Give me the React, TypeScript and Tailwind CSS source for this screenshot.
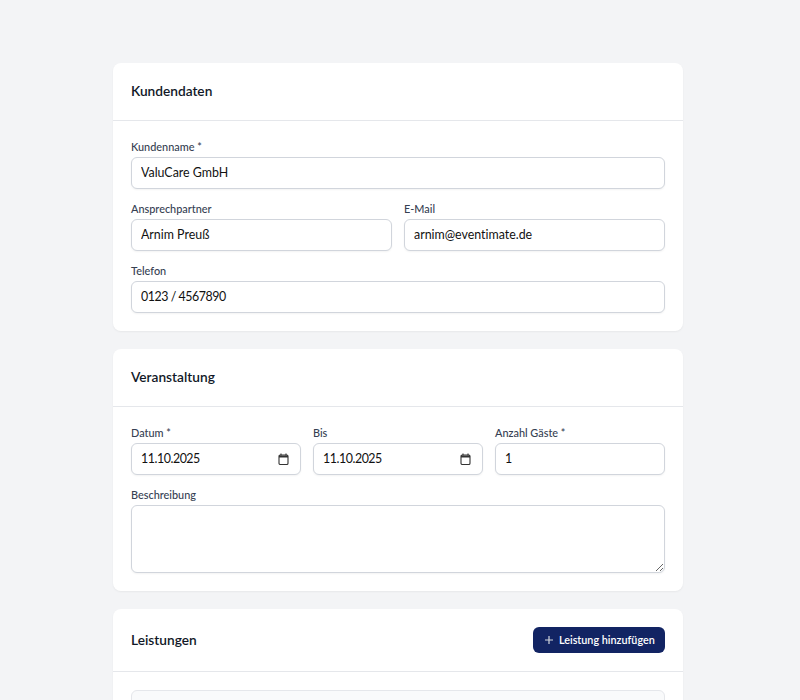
const font = { fontFamily: 'Lato, "Noto Sans", sans-serif', fontVariantLigatures: 'none' };

function Field({ label, value, date, numeric }: { label: string; value: string; date?: boolean; numeric?: boolean }) {
  return (
    <div>
      <label className="block mb-[3px] text-[10.9px] leading-[15px] font-medium text-gray-700">{label}</label>
      <div className="flex items-center h-8 pl-[9px] pr-[11px] bg-white border border-gray-300 rounded-md shadow-xs">
        <input
          readOnly
          value={value}
          style={font}
          className={`w-full min-w-0 pt-px text-[12.4px] text-[#111] outline-none bg-transparent ${numeric ? 'tracking-[-0.45px]' : ''}`}
        />
        {date && (
          <svg viewBox="0 0 11 12" className="w-[11px] h-3 shrink-0 text-[#333]" fill="none" stroke="currentColor">
            <rect x="1" y="2" width="9" height="9.500" rx="1.200" strokeWidth="1.100" />
            <path d="M1 3.500h9" strokeWidth="2" />
            <path d="M3 .500v2M8 .500v2" strokeWidth="1.100" />
          </svg>
        )}
      </div>
    </div>
  );
}

function CardHeader({ title }: { title: string }) {
  return (
    <div className="p-[18px] border-b border-gray-200">
      <h2 className="text-[13.7px] leading-[19px] mb-[2px] font-semibold text-[#111827]">{title}</h2>
    </div>
  );
}

export default function App() {
  return (
    <div style={font} className="h-[700px] overflow-hidden bg-gray-100 pt-[63px] pl-[113px]">
      <div className="w-[570px] flex flex-col gap-[18px]">
        <section className="bg-white rounded-lg shadow-xs">
          <CardHeader title="Kundendaten" />
          <div className="p-[18px] flex flex-col gap-3">
            <Field label="Kundenname *" value="ValuCare GmbH" />
            <div className="grid grid-cols-2 gap-3">
              <Field label="Ansprechpartner" value="Arnim Preuß" />
              <Field label="E-Mail" value="arnim@eventimate.de" />
            </div>
            <Field label="Telefon" value="0123 / 4567890" numeric />
          </div>
        </section>

        <section className="bg-white rounded-lg shadow-xs">
          <CardHeader title="Veranstaltung" />
          <div className="p-[18px] flex flex-col gap-3">
            <div className="grid grid-cols-3 gap-3">
              <Field label="Datum *" value="11.10.2025" date numeric />
              <Field label="Bis" value="11.10.2025" date numeric />
              <Field label="Anzahl Gäste *" value="1" numeric />
            </div>
            <div>
              <label className="block mb-[3px] text-[10.9px] leading-[15px] font-medium text-gray-700">Beschreibung</label>
              <textarea readOnly className="block w-full h-[68px] px-[10px] py-2 text-[12.4px] bg-white border border-gray-300 rounded-md shadow-xs outline-none" />
            </div>
          </div>
        </section>

        <section className="bg-white rounded-lg shadow-xs">
          <div className="flex items-center justify-between p-[18px] border-b border-gray-200">
            <h2 className="text-[13.7px] leading-[19px] mb-[2px] font-semibold text-[#111827]">Leistungen</h2>
            <button className="flex items-center gap-[5px] h-[26px] w-[132px] pl-[11px] rounded-md bg-[#122463] text-[10.8px] font-semibold text-white whitespace-nowrap">
              <svg viewBox="0 0 10 10" className="w-[10px] h-[10px] text-gray-300" fill="none" stroke="currentColor" strokeWidth="1.200">
                <path d="M5 1v8M1 5h8" />
              </svg>
              Leistung hinzufügen
            </button>
          </div>
          <div className="p-[18px]">
            <div className="h-40 bg-gray-50 border border-gray-200 rounded-md" />
          </div>
        </section>
      </div>
    </div>
  );
}
